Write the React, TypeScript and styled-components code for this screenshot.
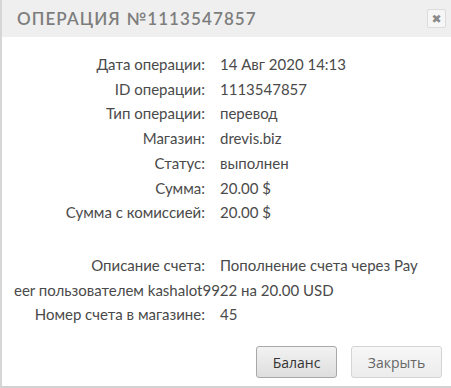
import React from "react";
import styled, { createGlobalStyle } from "styled-components";

const Global = createGlobalStyle`
  html, body {
    margin: 0;
    padding: 0;
    background: #ffffff;
  }
`;

const Dialog = styled.div`
  width: 451px;
  height: 388px;
  box-sizing: border-box;
  border-left: 2px solid #d6d6d6;
  border-bottom: 2px solid #d2d2d2;
  background: #ffffff;
  display: flex;
  flex-direction: column;
  font-family: "Lato", "Noto Sans", sans-serif;
`;

const Header = styled.div`
  height: 37px;
  flex-shrink: 0;
  background: #efefef;
  display: flex;
  align-items: center;
  justify-content: space-between;
  padding: 0 5px 0 15px;
`;

const Title = styled.div`
  font-size: 17px;
  font-weight: 600;
  letter-spacing: 1.1px;
  color: #7d7d7d;
  text-transform: uppercase;
`;

const CloseButton = styled.div`
  width: 17px;
  height: 17px;
  border: 1px solid #dcdcdc;
  border-radius: 2px;
  background: #f6f6f6;
  color: #8a8a8a;
  font-size: 12px;
  display: flex;
  align-items: center;
  justify-content: center;
  font-family: "DejaVu Sans", sans-serif;
`;

const Body = styled.div`
  flex: 1;
  padding: 15px 29px 0 12px;
  color: #4a4a4a;
  font-size: 15px;
  line-height: 24.7px;
`;

const Group = styled.div<{ $gap?: number }>`
  margin-top: ${(p) => p.$gap ?? 0}px;
`;

const Row = styled.div`
  word-break: break-all;
`;

const Label = styled.span`
  display: inline-block;
  width: 191px;
  padding-right: 15px;
  text-align: right;
  word-break: normal;
`;

const Value = styled.span``;

const Footer = styled.div`
  display: flex;
  justify-content: flex-end;
  gap: 14px;
  padding: 0 9px 8px 0;
`;

const Button = styled.button<{ $primary?: boolean }>`
  height: 32px;
  padding: 0 14px;
  border-radius: 3px;
  font-family: "Open Sans", "DejaVu Sans", sans-serif;
  font-size: 14px;
  color: ${(p) => (p.$primary ? "#333" : "#666")};
  border: 1px solid ${(p) => (p.$primary ? "#a8a8a8" : "#d4d4d4")};
  background: ${(p) =>
    p.$primary
      ? "linear-gradient(#f2f2f2, #dedede)"
      : "linear-gradient(#f7f7f7, #ececec)"};
  width: ${(p) => (p.$primary ? 81 : 91)}px;
`;

const rows: [string, string][] = [
  ["Дата операции:", "14 Авг 2020 14:13"],
  ["ID операции:", "1113547857"],
  ["Тип операции:", "перевод"],
  ["Магазин:", "drevis.biz"],
  ["Статус:", "выполнен"],
  ["Сумма:", "20.00 $"],
  ["Сумма с комиссией:", "20.00 $"],
];

const extra: [string, string][] = [
  ["Описание счета:", "Пополнение счета через Payeer пользователем kashalot9922 на 20.00 USD"],
  ["Номер счета в магазине:", "45"],
];

export default function App() {
  return (
    <>
      <Global />
      <Dialog>
        <Header>
          <Title>Операция №1113547857</Title>
          <CloseButton>✖</CloseButton>
        </Header>
        <Body>
          <Group>
            {rows.map(([l, v]) => (
              <Row key={l}>
                <Label>{l}</Label>
                <Value>{v}</Value>
              </Row>
            ))}
          </Group>
          <Group $gap={28}>
            {extra.map(([l, v]) => (
              <Row key={l}>
                <Label>{l}</Label>
                <Value>{v}</Value>
              </Row>
            ))}
          </Group>
        </Body>
        <Footer>
          <Button $primary>Баланс</Button>
          <Button>Закрыть</Button>
        </Footer>
      </Dialog>
    </>
  );
}
